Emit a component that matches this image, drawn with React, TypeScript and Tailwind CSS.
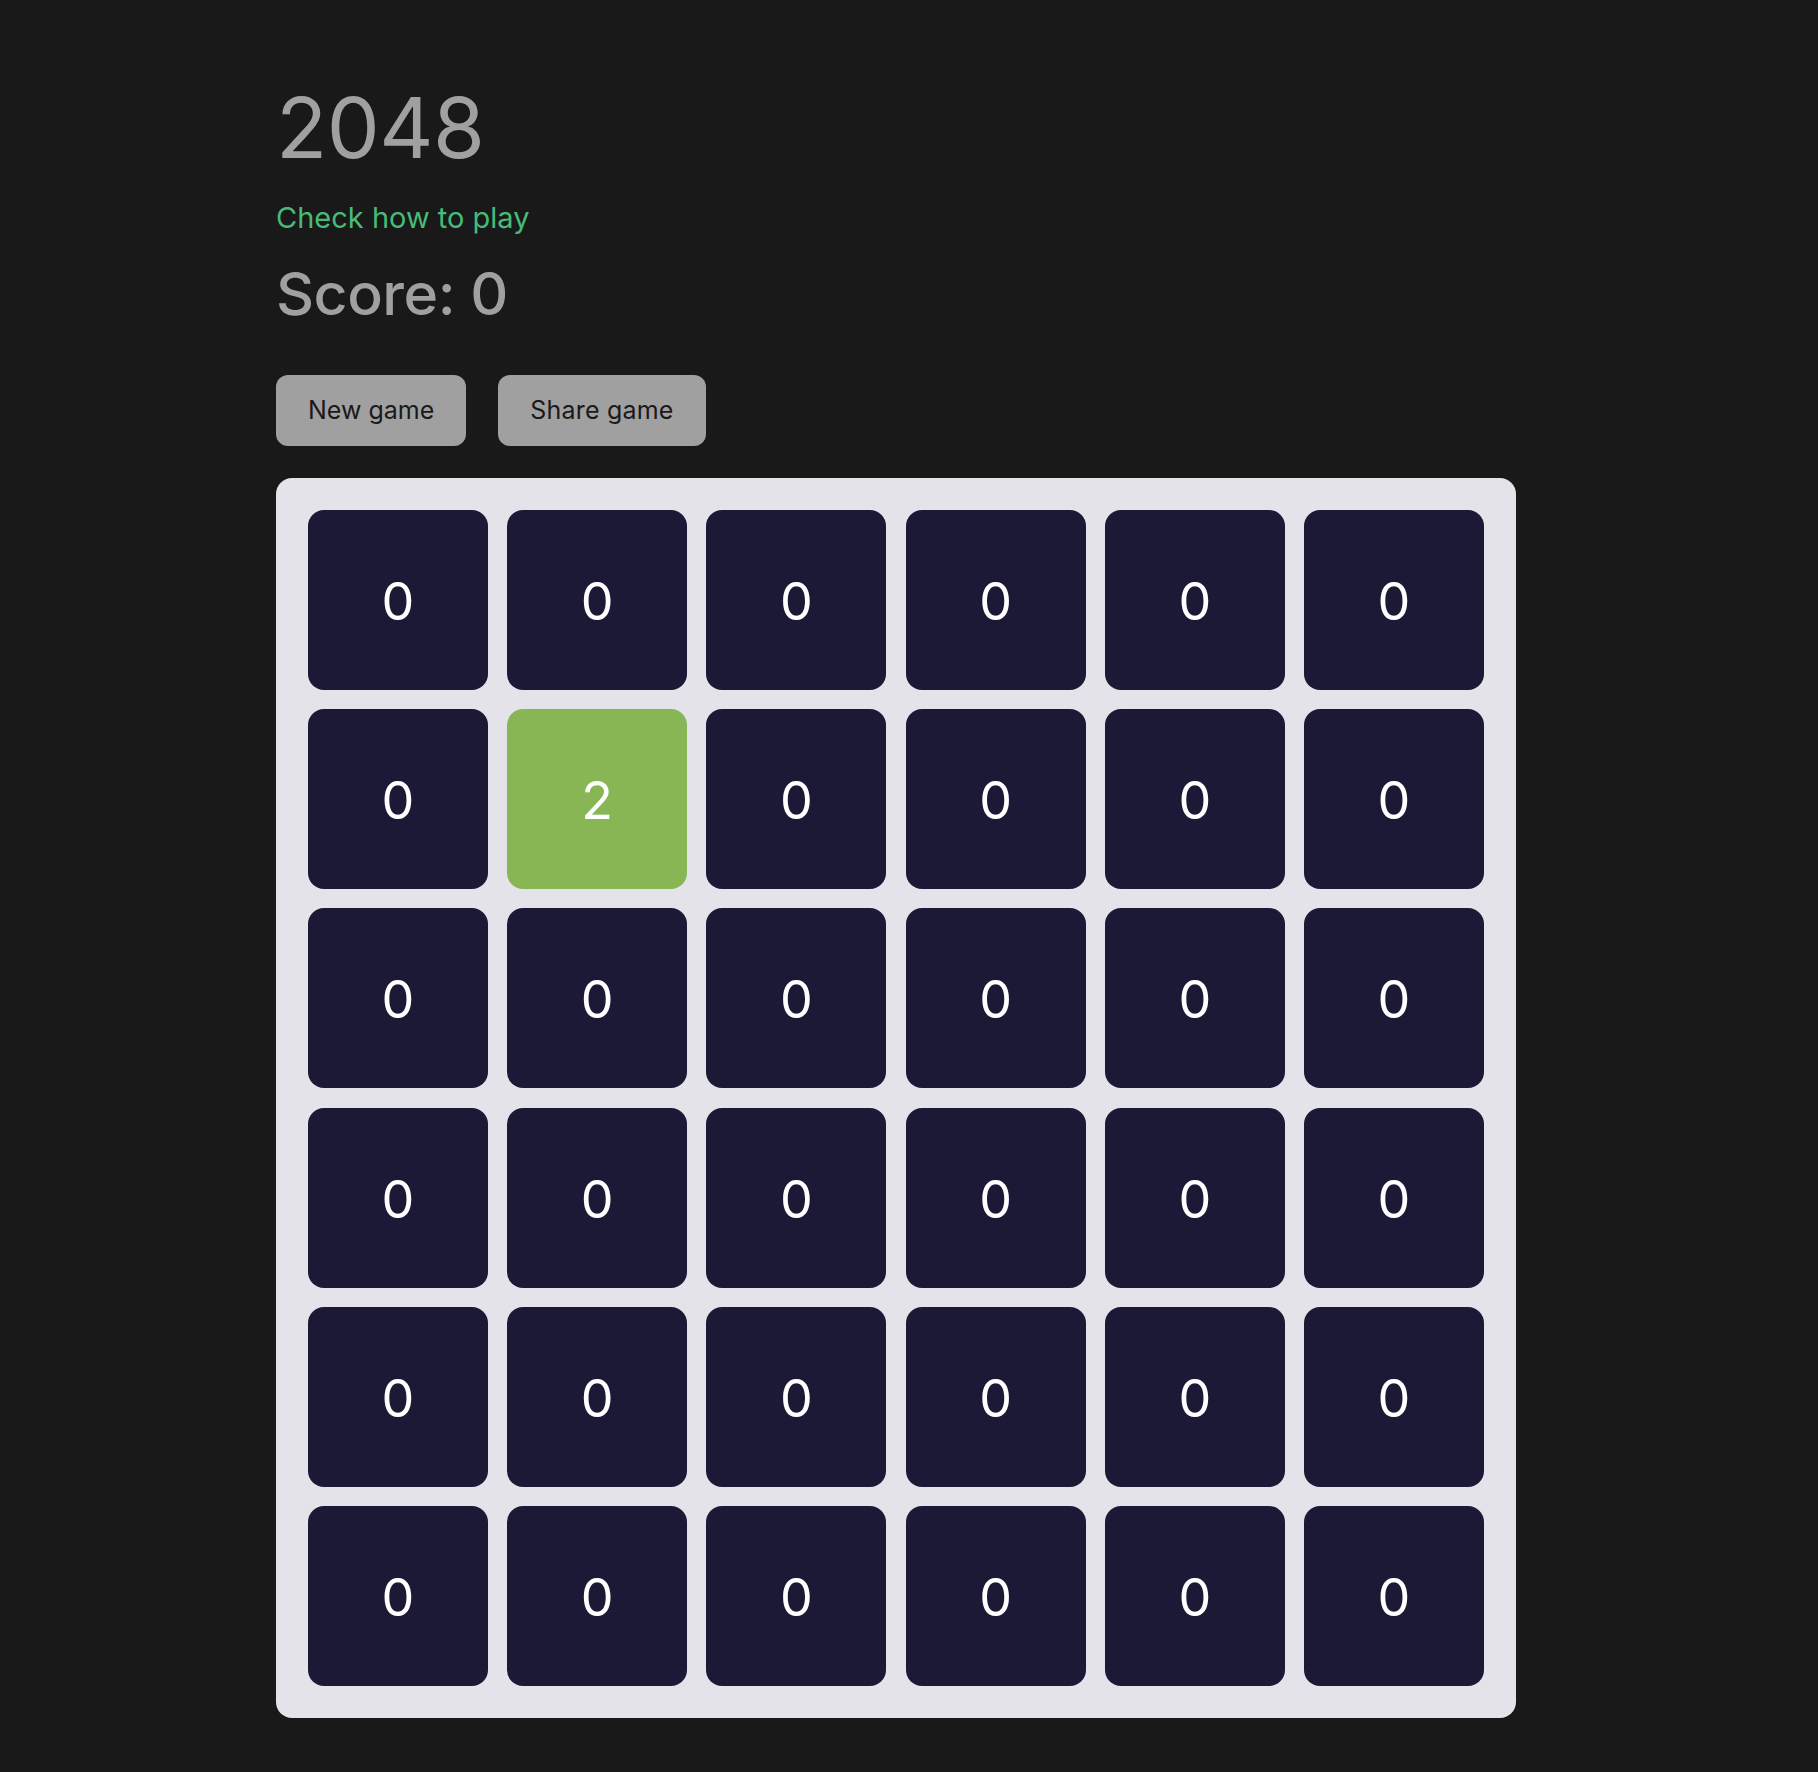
import React, { useState } from 'react';

const SIZE = 6;

const initialBoard = (): number[][] => {
  const b = Array.from({ length: SIZE }, () => Array(SIZE).fill(0));
  b[1][1] = 2;
  return b;
};

const Tile = ({ value }: { value: number }) => (
  <div
    className={`flex h-[180px] w-[180px] items-center justify-center rounded-2xl pt-1 text-[52px] leading-none text-white ${
      value === 0 ? 'bg-[#1c1936]' : 'bg-[#88b655]'
    }`}
  >
    {value}
  </div>
);

const App = () => {
  const [board, setBoard] = useState<number[][]>(initialBoard);
  const [score, setScore] = useState(0);

  const newGame = () => {
    setBoard(initialBoard());
    setScore(0);
  };

  return (
    <div className="min-h-screen bg-[#191919] font-['Inter','Liberation_Sans',sans-serif]">
      <div className="mx-auto flex w-[1266px] flex-col pt-[86px] pb-[54px]">
        <h1 className="text-[84px] leading-none tracking-[-0.5px] text-[#a0a0a0]">2048</h1>
        <a href="#" className="mt-[33px] text-[29px] leading-none text-[#48bb78]">
          Check how to play
        </a>
        <div className="mt-[32px] text-[59px] font-medium leading-none tracking-[-0.5px] text-[#a0a0a0]">
          Score: {score}
        </div>
        <div className="mt-[52px] flex gap-8">
          <button
            onClick={newGame}
            className="h-[71px] rounded-xl bg-[#a0a0a0] px-8 text-[25px] text-[#1a1a1a]"
          >
            New game
          </button>
          <button className="h-[71px] rounded-xl bg-[#a0a0a0] px-8 text-[25px] tracking-[0.2px] text-[#1a1a1a]">
            Share game
          </button>
        </div>
        <div className="mt-8 grid w-[1240px] grid-cols-6 gap-[19.2px] rounded-2xl bg-[#e3e3e9] p-8">
          {board.map((row, r) =>
            row.map((v, c) => <Tile key={`${r}-${c}`} value={v} />)
          )}
        </div>
      </div>
    </div>
  );
};

export default App;
